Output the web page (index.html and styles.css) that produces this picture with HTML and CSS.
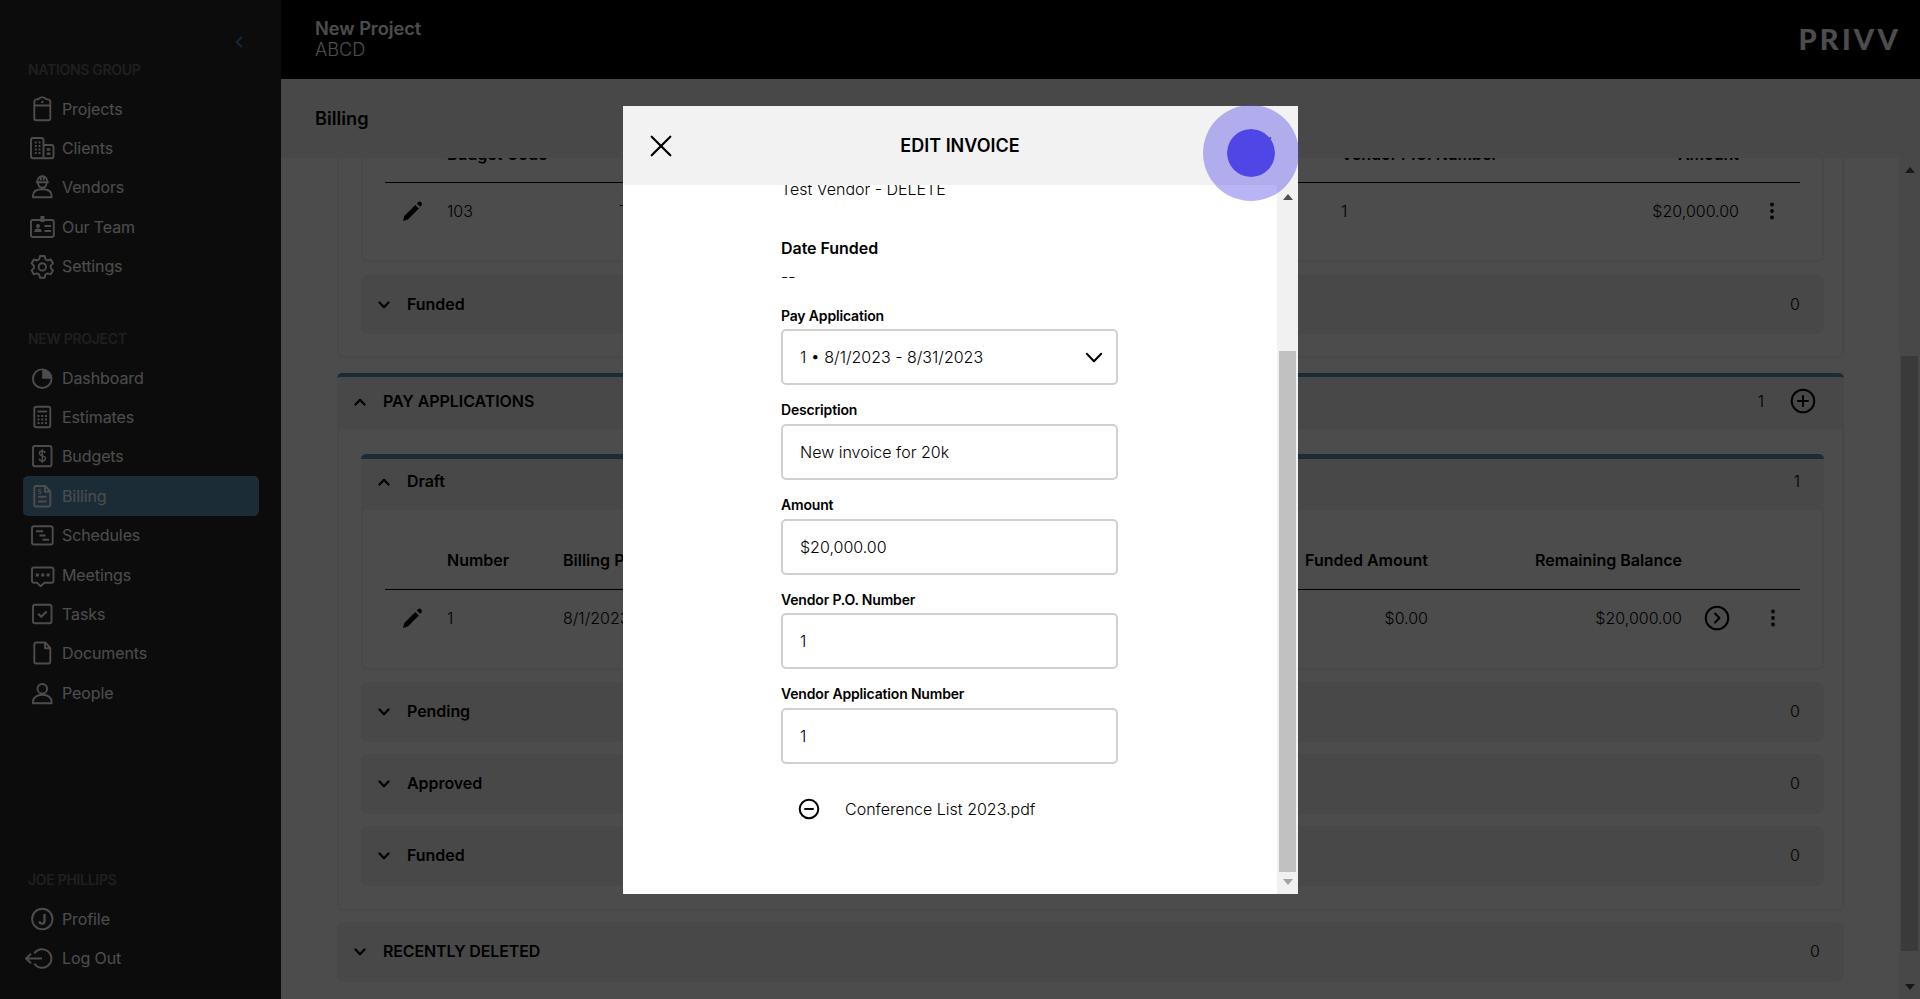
FILE: index.html
```html
<!DOCTYPE html>
<html lang="en">
<head>
<meta charset="utf-8">
<title>Billing</title>
<link rel="stylesheet" href="styles.css">
</head>
<body>
<div class="app">
  <aside class="sidebar">
    <div class="collapse"><svg width="10" height="14" viewBox="0 0 10 14"><path d="M7.6 2.2 2.6 7l5 4.800" stroke-width="2"/></svg></div>
    <h2 class="nav-title">NATIONS GROUP</h2>
    <nav class="nav">
      <a class="nav-item"><svg class="ico" viewBox="0 0 28 28"><path d="M6.300 8.500V6.500q0-1.500 1.500-1.900l3.200-.8q1-1.400 2.200-1.400h2.200q1.200 0 2.200 1.400l3.200.8q1.500.4 1.500 1.900v17q0 1.700-1.700 1.700H8q-1.700 0-1.700-1.700zM6.300 10.500h16"/><circle class="dot" cx="14.300" cy="6.900" r="1.200"/></svg>Projects</a>
      <a class="nav-item"><svg class="ico" viewBox="0 0 28 28"><path d="M15.500 24.300H5q-2 0-2-2V6q0-2 2-2h8.500q2 0 2 2v18.300M15.500 11h8q2 0 2 2v9.300q0 2-2 2h-8"/><path d="M7.800 7.500v13M11.500 7.500v13" stroke-dasharray="2 1.500" stroke-width="1.900"/><path d="M18.800 15.500h3.500M18.800 19.800h3.500" stroke-width="2.600"/></svg>Clients</a>
      <a class="nav-item"><svg class="ico" viewBox="0 0 28 28"><path d="M8 9.200h12.700M9.500 8.500c0-3 2-5.300 4.800-5.300s4.800 2.300 4.800 5.300M12.800 2.500v5M15.800 2.500v5"/><path d="M10 10c.3 3 2 4.700 4.300 4.700s4-1.700 4.300-4.700M5 24.300v-1.500c0-4 3.500-6.500 9.300-6.500s9.300 2.500 9.300 6.500v1.500z"/></svg>Vendors</a>
      <a class="nav-item"><svg class="ico" viewBox="0 0 28 28"><rect x="3" y="7" width="22.800" height="17" rx="2"/><path d="M14.400 3v6" stroke-width="4"/><path d="M16.500 13h6.500M16.500 18h6.500"/><circle class="dot" cx="10" cy="13" r="2"/><path class="dot" d="M6.300 19c0-2.500 1.500-3.500 3.700-3.500s3.700 1 3.700 3.500z"/></svg>Our Team</a>
      <a class="nav-item"><svg class="ico" viewBox="0 0 28 28"><path d="M12 4h4.600l.8 3.200 2.200 1.300 3.200-1 2.200 3.800-2.300 2.300v2.500l2.300 2.300-2.200 3.900-3.200-1-2.200 1.300-.8 3.200H12l-.8-3.200L9 21.300l-3.200 1-2.200-3.900 2.300-2.300v-2.500l-2.300-2.300 2.200-3.800 3.200 1 2.200-1.300z"/><circle cx="14.300" cy="14.900" r="3.700"/></svg>Settings</a>
    </nav>
    <h2 class="nav-title second">NEW PROJECT</h2>
    <nav class="nav">
      <a class="nav-item"><svg class="ico" viewBox="0 0 28 28"><circle cx="14.200" cy="14.700" r="9.300"/><path class="dot" d="M14.200 14.700V5.400a9.300 9.300 0 0 1 9.300 9.300z"/></svg>Dashboard</a>
      <a class="nav-item"><svg class="ico" viewBox="0 0 28 28"><rect x="6.300" y="3.700" width="16" height="20.500" rx="2"/><path d="M9.500 8.500h9.600"/><path d="M9.500 13h10M9.500 16.500h10M9.500 20h10" stroke-dasharray="2 1.700" stroke-width="2.200"/></svg>Estimates</a>
      <a class="nav-item"><svg class="ico" viewBox="0 0 28 28"><rect x="5" y="4" width="18.500" height="20.300" rx="2"/><path d="M17.200 11c-.3-1.400-1.400-2-2.900-2-1.700 0-2.900.8-2.900 2.300 0 3.600 6 1.500 6 5.300 0 1.500-1.300 2.400-3.100 2.400-1.700 0-2.900-.8-3.100-2.300M14.300 7.300v13.700" stroke-width="1.400"/></svg>Budgets</a>
      <a class="nav-item active"><svg class="ico" viewBox="0 0 28 28"><path d="M8.300 4h9l5 5.500v13q0 2-2 2h-12q-2 0-2-2V6q0-2 2-2zM17 4v5.800h5.300M10 14.800h8.500M10 19.500h8.500"/><path d="M12.800 7.500h-2v2h2v2h-2.300" stroke-width="1"/></svg>Billing</a>
      <a class="nav-item"><svg class="ico" viewBox="0 0 28 28"><rect x="4" y="5.200" width="20.700" height="18.300" rx="2"/><path d="M8 10.300h7M11.500 14.500h6M14.500 18.800h6.500"/></svg>Schedules</a>
      <a class="nav-item"><svg class="ico" viewBox="0 0 28 28"><path d="M6 6.500h17.500q2 0 2 2v11.200q0 2-2 2h-7l-4 3.500-3.500-3.500H6q-2 0-2-2V8.500q0-2 2-2z"/><path d="M7.800 14h14" stroke-dasharray="3 2.400" stroke-width="3"/></svg>Meetings</a>
      <a class="nav-item"><svg class="ico" viewBox="0 0 28 28"><rect x="5" y="4.700" width="18.500" height="18.500" rx="2"/><path d="m10.200 13.800 3 3 5.500-5.300" stroke-width="2.200"/></svg>Tasks</a>
      <a class="nav-item"><svg class="ico" viewBox="0 0 28 28"><path d="M8.300 3.500h9l5 5.500v13.500q0 2-2 2h-12q-2 0-2-2v-17q0-2 2-2zM17 3.500v5.800h5.300"/></svg>Documents</a>
      <a class="nav-item"><svg class="ico" viewBox="0 0 28 28"><circle cx="14.300" cy="9.800" r="4.800"/><path d="M5 24.300v-1.500c0-4 3.500-7 9.300-7s9.300 3 9.300 7v1.500z"/></svg>People</a>
    </nav>
    <div class="spacer"></div>
    <h2 class="nav-title">JOE PHILLIPS</h2>
    <nav class="nav">
      <a class="nav-item"><svg class="ico" viewBox="0 0 28 28"><circle cx="14.300" cy="14" r="10.200"/><path d="M16.500 9v7q0 2.600-2.500 2.600T11.500 16.200" stroke-width="2.300"/></svg>Profile</a>
      <a class="nav-item"><svg class="ico" viewBox="0 0 28 28"><path d="M6.300 9.500a9.300 9.300 0 1 1 0 10M14 14.500H-2M3 9.800l-5 4.700 5 4.700"/></svg>Log Out</a>
    </nav>
  </aside>

  <main class="main">
    <header class="topbar">
      <div class="project"><b>New Project</b><span>ABCD</span></div>
      <div class="logo">PRIVV</div>
    </header>
    <div class="subbar">Billing</div>
    <div class="scroll">
      <div class="content">
        <section class="card cut-top">
          <div class="panel cut-top">
            <div class="table invoices">
              <div class="thead"><span></span><span>Budget Code</span><span>Vendor</span><span>Vendor P.O. Number</span><span class="num">Amount</span></div>
              <div class="trow"><span><svg class="pencil" viewBox="0 0 22 22"><path d="M1 21l1.300-5L13.300 5l3.500 3.500L5.800 19.500zM14.800 3.500l1.500-1.500q1.500-1.200 3 .4 1.400 1.500.3 2.900l-1.500 1.500z"/></svg></span><span>103</span><span>Test Vendor</span><span>1</span><span class="num">$20,000.00</span><span class="mid"><svg class="dots" viewBox="0 0 6 18"><circle cx="3" cy="2.500" r="1.900"/><circle cx="3" cy="9" r="1.900"/><circle cx="3" cy="15.500" r="1.900"/></svg></span></div>
            </div>
          </div>
          <div class="bar"><svg class="chev" viewBox="0 0 12 8"><path d="M1.500 1.500 6 6.200l4.500-4.700"/></svg><b>Funded</b><span>0</span></div>
        </section>

        <section class="card accent">
          <div class="head"><svg class="chev" viewBox="0 0 12 8"><path d="M1.500 6.500 6 1.800l4.500 4.700"/></svg><b>PAY APPLICATIONS</b><span>1</span><svg class="round add" viewBox="0 0 26 26"><circle cx="13" cy="13" r="11.300"/><path d="M13 8v10M8 13h10"/></svg></div>
          <div class="body">
            <div class="panel draft">
              <div class="head"><svg class="chev" viewBox="0 0 12 8"><path d="M1.500 6.500 6 1.800l4.500 4.700"/></svg><b>Draft</b><span>1</span></div>
              <div class="table pays">
                <div class="thead"><span></span><span>Number</span><span>Billing Period</span><span class="num">Funded Amount</span><span class="num">Remaining Balance</span></div>
                <div class="trow"><span><svg class="pencil" viewBox="0 0 22 22"><path d="M1 21l1.300-5L13.300 5l3.500 3.500L5.800 19.500zM14.800 3.500l1.500-1.500q1.500-1.200 3 .4 1.400 1.500.3 2.900l-1.500 1.500z"/></svg></span><span>1</span><span>8/1/2023 - 8/31/2023</span><span class="num">$0.00</span><span class="num">$20,000.00</span><span class="mid"><svg class="round" viewBox="0 0 26 26"><circle cx="13" cy="13" r="11.300"/><path d="m11 8.500 4.500 4.500-4.500 4.500"/></svg></span><span class="mid"><svg class="dots" viewBox="0 0 6 18"><circle cx="3" cy="2.500" r="1.900"/><circle cx="3" cy="9" r="1.900"/><circle cx="3" cy="15.500" r="1.900"/></svg></span></div>
              </div>
            </div>
            <div class="bar"><svg class="chev" viewBox="0 0 12 8"><path d="M1.500 1.500 6 6.200l4.500-4.700"/></svg><b>Pending</b><span>0</span></div>
            <div class="bar"><svg class="chev" viewBox="0 0 12 8"><path d="M1.500 1.500 6 6.200l4.500-4.700"/></svg><b>Approved</b><span>0</span></div>
            <div class="bar"><svg class="chev" viewBox="0 0 12 8"><path d="M1.500 1.500 6 6.200l4.500-4.700"/></svg><b>Funded</b><span>0</span></div>
          </div>
        </section>

        <section class="bar deleted"><svg class="chev" viewBox="0 0 12 8"><path d="M1.500 1.500 6 6.200l4.500-4.700"/></svg><b>RECENTLY DELETED</b><span>0</span></section>
      </div>
      <div class="sbar page"><i class="up"></i><i class="thumb"></i><i class="down"></i></div>
    </div>
  </main>
</div>

<div class="overlay">
  <div class="modal">
    <header class="modal-head">
      <svg class="close" viewBox="0 0 22 22"><path d="M1.700 1.700l18.600 18.600M20.300 1.700 1.700 20.300"/></svg>
      <h1>EDIT INVOICE</h1>
      <svg class="save" viewBox="0 0 24 18"><path d="M2 9.500 8.500 16 21.300 3"/></svg>
      <span class="pulse"></span>
    </header>
    <div class="modal-body">
      <form class="form">
        <p class="vendor">Test Vendor - DELETE</p>
        <h3>Date Funded</h3>
        <p class="value">--</p>
        <label>Pay Application</label>
        <div class="input"><span>1 • 8/1/2023 - 8/31/2023</span><svg class="caret" viewBox="0 0 18 12"><path d="M1.800 1.800 9 9.300l7.200-7.500"/></svg></div>
        <label>Description</label>
        <div class="input">New invoice for 20k</div>
        <label>Amount</label>
        <div class="input">$20,000.00</div>
        <label>Vendor P.O. Number</label>
        <div class="input">1</div>
        <label>Vendor Application Number</label>
        <div class="input">1</div>
        <div class="file"><svg viewBox="0 0 22 22"><circle cx="11" cy="11" r="9.300"/><path d="M7 11h8"/></svg>Conference List 2023.pdf</div>
      </form>
      <div class="sbar"><i class="up"></i><i class="thumb"></i><i class="down"></i></div>
    </div>
  </div>
</div>
</body>
</html>
```
FILE: styles.css
```css
* { box-sizing: border-box; }
body { margin: 0; font-family: Inter, "Liberation Sans", sans-serif; font-size: 16px; font-weight: 300; line-height: 20px; color: #000; overflow: hidden; }
h1, h2, h3, p { margin: 0; }
b { font-weight: 600; }
svg { flex: none; display: block; fill: none; stroke: currentColor; stroke-width: 2; stroke-linecap: round; stroke-linejoin: round; }

.app { display: flex; height: 999px; }
.sidebar { flex: none; width: 281px; background: #282828; color: #fff; display: flex; flex-direction: column; padding: 34px 22px 21px 23px; }
.collapse { align-self: flex-end; color: #3e86b4; height: 26px; margin-right: 15px; padding-top: 1px; }
.nav-title { font-size: 14px; font-weight: 600; line-height: 20px; color: #686868; padding-left: 5px; letter-spacing: -.3px; }
.nav-title.second { margin-top: 43px; }
.nav { padding-top: 9px; }
.nav-item { display: flex; align-items: center; height: 39.400px; gap: 6px; padding-left: 5px; font-weight: 400; letter-spacing: -.1px; border-radius: 5px; }
.nav-item.active { background: #5a93ba; }
.ico { width: 28px; height: 28px; stroke-width: 1.900; overflow: visible; stroke-linecap: butt; }
.dot { fill: currentColor; stroke: none; }
.spacer { flex: 1; }

.main { flex: 1; min-width: 0; display: flex; flex-direction: column; }
.topbar { height: 79px; background: #000; color: #fff; display: flex; justify-content: space-between; padding: 18px 21px 0 34px; }
.project { display: flex; flex-direction: column; font-size: 18.200px; line-height: 21px; }
.logo { font-family: Lato, sans-serif; font-weight: 900; font-size: 29px; line-height: 42px; letter-spacing: 3.200px; margin-right: -2px; }
.subbar { height: 79px; background: #f2f2f2; font-size: 18.200px; font-weight: 600; line-height: 78px; padding-left: 34px; }
.scroll { flex: 1; display: flex; overflow: hidden; background: #fff; }
.content { flex: 1; min-width: 0; padding: 0 55px 0 56px; }

.card { border: 2px solid #f2f2f2; border-radius: 6px; padding: 0 18px 22px 22px; margin-bottom: 15px; }
.card.accent { border-top: 0; padding: 0; margin-bottom: 11px; }
.cut-top { border-top: 0; border-radius: 0 0 6px 6px; }
.panel { border: 2px solid #f2f2f2; border-radius: 6px; }
.panel.cut-top { height: 104px; border-top: 0; border-radius: 0 0 6px 6px; margin-bottom: 13px; overflow: hidden; }
.body { padding: 25px 18px 23px 22px; }
.accent .head { margin: 0 -2px; height: 56px; border-top: 4px solid #5a93ba; border-radius: 5px 5px 0 0; background: #f0f0f0; display: flex; align-items: center; padding: 0 28px 4px 17px; }
.head b, .bar b { flex: 1; letter-spacing: -.05px; }
.chev { width: 12px; height: 8px; margin: 1px 17px 0 0; stroke-width: 2.200; }
.round { width: 26px; height: 26px; }
.add { margin-left: 26px; }
.panel.draft { border-top: 0; height: 216px; }
.accent .draft .head { border-top-width: 5px; padding-right: 24px; padding-bottom: 7px; }
.bar { height: 60px; margin-top: 12px; background: #f0f0f0; border-radius: 6px; display: flex; align-items: center; padding: 0 24px 2px 17px; }
.cut-top .bar { margin-top: 0; height: 59px; padding-bottom: 1px; }
.bar.deleted { margin-top: 0; }
.bar.deleted b { letter-spacing: -.15px; }

.table { margin: 0 22px; }
.invoices { margin-top: -32px; }
.thead, .trow { display: grid; align-items: center; }
.thead { font-weight: 600; height: 57px; border-bottom: 1px solid #000; }
.trow { height: 55px; }
.num { text-align: right; }
.mid { display: flex; justify-content: center; }
.invoices .thead, .invoices .trow { grid-template-columns: 62px 172px 722px 200px 198px 61px; }
.invoices .mid { padding-left: 5px; }
.pays .thead, .pays .trow { grid-template-columns: 62px 116px 665px 200px 254px 69px 43px; }
.pays .thead { height: 80px; padding-top: 21px; }
.pencil { width: 22px; height: 22px; margin-left: 17px; fill: #000; stroke: none; }
.dots { width: 6px; height: 18px; fill: #000; stroke: none; }

.sbar { flex: none; width: 21px; background: #f1f1f1; padding: 0 2px; display: flex; flex-direction: column; align-items: center; }
.sbar i { display: block; }
.up, .down { border: 5px solid transparent; }
.up { border-top: 0; border-bottom: 6px solid #505050; margin-top: 9px; }
.down { border-bottom: 0; border-top: 6px solid #a3a3a3; margin-top: auto; margin-bottom: 9px; }
.thumb { width: 17px; background: #c1c1c1; height: 521px; margin-top: 151px; }
.page .thumb { height: 595px; margin-top: 183px; }
.page .down { border-top-color: #505050; }

.overlay { position: absolute; inset: 0; background: rgba(0,0,0,.7); padding: 106px 0 0 623px; }
.modal { width: 675px; height: 788px; background: #fff; display: flex; flex-direction: column; }
.modal-head { position: relative; height: 79px; background: #f2f2f2; display: flex; align-items: center; padding: 0 25px 0 27px; }
.modal-head h1 { flex: 1; text-align: center; font-size: 18px; font-weight: 600; padding-right: 1px; }
.close { width: 22px; height: 22px; stroke-width: 2.200; }
.save { width: 24px; height: 18px; color: #1d7a3c; margin-top: -3px; }
.pulse { position: absolute; left: 580px; top: -1px; width: 96px; height: 96px; border-radius: 50%; background: #5046e5; border: 24px solid rgba(80,70,229,.4); background-clip: padding-box; z-index: 1; }
.modal-body { flex: 1; display: flex; overflow: hidden; }
.form { flex: 1; padding: 0 159px 0 158px; }
.vendor { margin-top: -6px; }
.form h3 { font-size: 16px; font-weight: 600; margin-top: 39px; letter-spacing: -.05px; }
.value { margin-top: 8px; margin-bottom: 18.500px; }
.form label { display: block; font-size: 14px; font-weight: 600; line-height: 22px; height: 24.700px; letter-spacing: -.17px; }
.input { height: 56px; border: 2px solid #d0d0d0; border-radius: 5px; margin-bottom: 14px; padding: 0 13px 0 17px; display: flex; align-items: center; justify-content: space-between; }
.caret { width: 18px; height: 12px; margin-top: 2px; }
.file { display: flex; align-items: center; gap: 25px; padding-left: 17px; margin-top: 34px; }
.file svg { width: 22px; height: 22px; }
```
